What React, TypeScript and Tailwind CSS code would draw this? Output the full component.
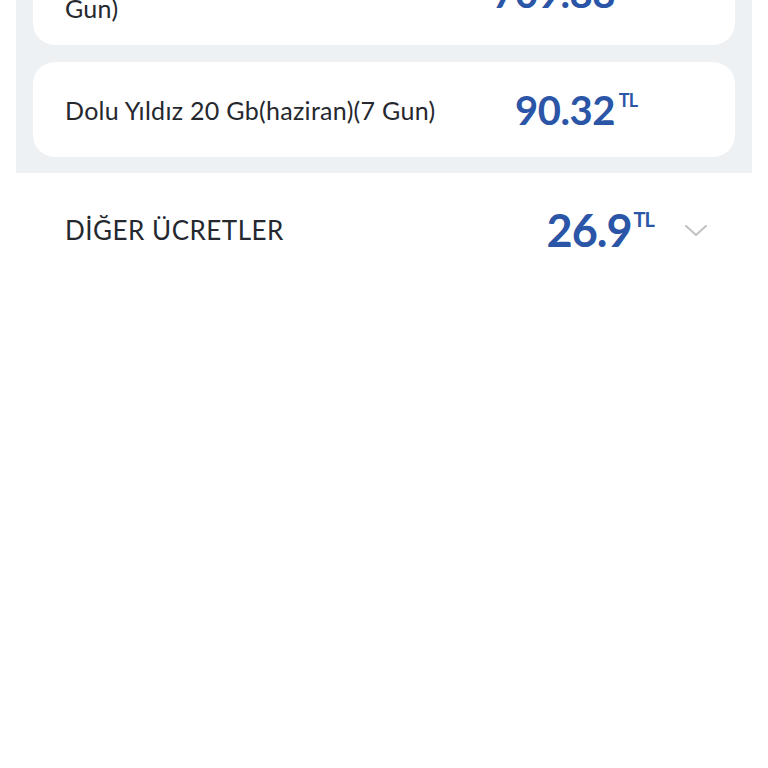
import React from 'react';

interface Package {
  id: number;
  name: string;
  amount: string;
}

const packages: Package[] = [
  { id: 1, name: 'Dolu Yıldız 20 Gb Paket(mayıs)(30 Gun)', amount: '709.88' },
  { id: 2, name: 'Dolu Yıldız 20 Gb(haziran)(7 Gun)', amount: '90.32' },
];

const Price: React.FC<{ amount: string; big?: boolean }> = ({ amount, big }) => (
  <div className="flex items-start text-[#2b55a6]">
    <span
      className={
        big
          ? 'text-[45px] font-bold leading-none tracking-[-1px]'
          : 'text-[40px] font-bold leading-none tracking-[-0.5px]'
      }
    >
      {amount}
    </span>
    <span
      className={`mt-[1px] font-bold leading-none tracking-[-1px] ${
        big ? 'ml-[2px] text-[20px]' : 'ml-[4px] text-[18px]'
      }`}
    >
      TL
    </span>
  </div>
);

const App: React.FC = () => {
  return (
    <div className="min-h-[768px] w-[768px] overflow-hidden bg-white font-['Lato',sans-serif] text-[#25282e]">
      {/* Packages */}
      <div className="mx-4 -mt-[59px] flex flex-col gap-[17px] bg-[#eef1f4] px-[17px] pb-4">
        {packages.map((p) => (
          <div
            key={p.id}
            className={`flex items-center rounded-[22px] bg-white pl-8 pr-[98px] ${
              p.id === 1 ? 'h-[104px]' : 'h-[95px]'
            }`}
          >
            <p className="w-[400px] text-[25px] leading-[30px] tracking-[0.3px]">{p.name}</p>
            <div className="flex flex-1 justify-end">
              <Price amount={p.amount} />
            </div>
          </div>
        ))}
      </div>

      {/* Other fees */}
      <div className="flex h-[114px] items-center pl-[65px] pr-[60px]">
        <h3 className="flex-1 text-[26px] tracking-[0.5px]">DİĞER ÜCRETLER</h3>
        <Price amount="26.9" big />
        <svg className="ml-[30px] h-[16px] w-[24px]" viewBox="0 0 24 16" fill="none">
          <path d="M2 4l10 9 10-9" stroke="#bfc1c4" strokeWidth="2" strokeLinecap="round" strokeLinejoin="round" />
        </svg>
      </div>
    </div>
  );
};

export default App;
